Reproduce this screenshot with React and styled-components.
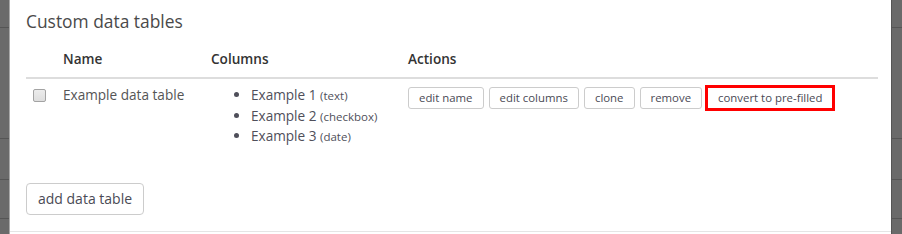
import React from 'react';
import styled, { createGlobalStyle } from 'styled-components';

const GlobalStyle = createGlobalStyle`
    html, body {
        margin: 0;
        padding: 0;
        background: #fff;
    }
    body {
        font-family: "Open Sans", "Liberation Sans", sans-serif;
        color: #555;
    }
`;

const Page = styled.div`
    display: flex;
    width: 902px;
    height: 234px;
    overflow: hidden;
`;

const Backdrop = styled.div`
    width: ${props => props.w}px;
    flex: none;
    display: flex;
    flex-direction: column;
    background: #6a6a6a;
`;

const BackdropRow = styled.div`
    height: ${props => props.h}px;
    flex: none;
    border-bottom: 1px solid #555;
`;

const Modal = styled.div`
    flex: 1;
    display: flex;
    flex-direction: column;
    background: #fff;
    border-left: 1px solid #a8a8a8;
    border-right: 1px solid #555;
`;

const ModalBody = styled.div`
    padding: 10px 13px 16px 16px;
    border-bottom: 1px solid #e5e5e5;
`;

const Title = styled.h4`
    margin: 0 0 9px 0;
    font-size: 17.4px;
    line-height: 22px;
    font-weight: 400;
    color: #4a4a4a;
`;

const Table = styled.table`
    width: 100%;
    border-collapse: collapse;
    font-size: 13.6px;
    margin-bottom: 28px;

    th {
        text-align: left;
        font-weight: 600;
        color: #333;
        padding: 8px;
        line-height: 20px;
        border-bottom: 2px solid #ddd;
    }

    td {
        vertical-align: top;
        padding: 6px 8px 8px 8px;
        line-height: 20px;
    }
`;

const Check = styled.span`
    display: block;
    width: 11px;
    height: 11px;
    margin-top: 4px;
    margin-left: -1px;
    border: 1px solid #a3a3a3;
    border-radius: 2px;
    background: linear-gradient(#ececec, #dedede);
`;

const ColumnList = styled.ul`
    margin: 0;
    padding-left: 40px;
    line-height: 19.5px;
    color: #4f4f5a;
`;

const ColType = styled.span`
    font-size: 11.5px;
`;

const Actions = styled.div`
    display: flex;
    gap: 5px;
    padding-top: 2px;
`;

const SmallButton = styled.button`
    font-family: "Open Sans", "Liberation Sans", sans-serif;
    font-size: 11.4px;
    line-height: 14px;
    color: #4a4a55;
    background: #fff;
    border: 1px solid #ccc;
    border-radius: ${props => props.highlight ? '0' : '3px'};
    padding: 3px 10px;
    height: 22px;
    outline: ${props => props.highlight ? '3px solid #f00' : 'none'};
    outline-offset: -1px;
`;

const AddButton = styled.button`
    font-family: "Open Sans", "Liberation Sans", sans-serif;
    font-size: 14px;
    color: #4a4a55;
    background: #fff;
    border: 1px solid #ccc;
    border-radius: 4px;
    padding: 0 11px;
    height: 32px;
`;

const strip = [27, 110, 40, 38, 30];

const columns = [
    { name: 'Example 1', type: 'text' },
    { name: 'Example 2', type: 'checkbox' },
    { name: 'Example 3', type: 'date' },
];

const actions = ['edit name', 'edit columns', 'clone', 'remove', 'convert to pre-filled'];

export default function App() {
    return (
        <Page>
            <GlobalStyle />
            <Backdrop w={9}>
                {strip.map((h, i) => <BackdropRow key={i} h={h} />)}
            </Backdrop>
            <Modal>
                <ModalBody>
                    <Title>Custom data tables</Title>
                    <Table>
                        <colgroup>
                            <col style={{ width: 29 }} />
                            <col style={{ width: 148 }} />
                            <col style={{ width: 197 }} />
                            <col />
                        </colgroup>
                        <thead>
                            <tr>
                                <th></th>
                                <th>Name</th>
                                <th>Columns</th>
                                <th>Actions</th>
                            </tr>
                        </thead>
                        <tbody>
                            <tr>
                                <td><Check /></td>
                                <td>Example data table</td>
                                <td>
                                    <ColumnList>
                                        {columns.map(c => (
                                            <li key={c.name}>{c.name} <ColType>({c.type})</ColType></li>
                                        ))}
                                    </ColumnList>
                                </td>
                                <td>
                                    <Actions>
                                        {actions.map(a => (
                                            <SmallButton key={a} highlight={a === 'convert to pre-filled'}>{a}</SmallButton>
                                        ))}
                                    </Actions>
                                </td>
                            </tr>
                        </tbody>
                    </Table>
                    <AddButton>add data table</AddButton>
                </ModalBody>
            </Modal>
            <Backdrop w={10}>
                {strip.map((h, i) => <BackdropRow key={i} h={h} />)}
            </Backdrop>
        </Page>
    );
}
